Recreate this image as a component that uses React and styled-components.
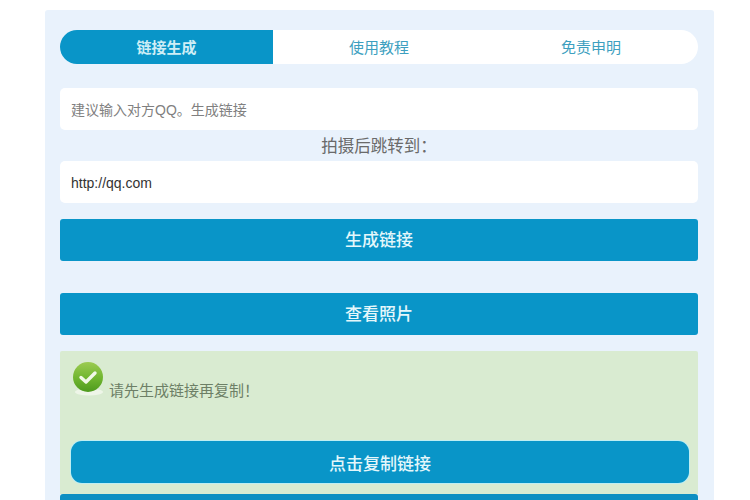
import React from 'react';
import styled, { createGlobalStyle } from 'styled-components';

const GlobalStyle = createGlobalStyle`
    html, body {
        margin: 0;
        height: 500px;
        overflow: hidden;
        background: #fff;
        font-family: "Liberation Sans", "Noto Sans CJK SC", sans-serif;
    }
    * {
        box-sizing: border-box;
    }
`;

const Page = styled.div`
    width: 750px;
    height: 500px;
    padding: 10px 0 0 45px;
    overflow: hidden;
`;

const Panel = styled.div`
    width: 669px;
    padding: 20px 16px 0 15px;
    background: #e9f2fc;
    border-radius: 3px 3px 0 0;
    height: 490px;
`;

const Tabs = styled.div`
    display: grid;
    grid-template-columns: 213px 212px 212px;
    height: 34px;
    background: #fff;
    border-radius: 17px;
    overflow: hidden;
    margin-bottom: 24px;
`;

const Tab = styled.div`
    display: flex;
    align-items: center;
    justify-content: center;
    padding-bottom: 1px;
    font-size: 15px;
    font-weight: ${p => (p.$active ? 'bold' : 'normal')};
    color: ${p => (p.$active ? '#cfeef6' : '#3d9fc0')};
    background: ${p => (p.$active ? '#0995c8' : 'transparent')};
`;

const Field = styled.input`
    display: block;
    width: 638px;
    height: 42px;
    padding: 2px 11px 0;
    border: 0;
    outline: 0;
    border-radius: 5px;
    background: #fff;
    font-family: inherit;
    font-size: 14px;
    color: #333;

    &::placeholder {
        color: #808080;
        opacity: 1;
    }
`;

const Label = styled.div`
    height: 31px;
    line-height: 32px;
    text-align: center;
    font-size: 16.5px;
    color: #6a6a6a;
`;

const Button = styled.div`
    display: flex;
    align-items: center;
    justify-content: center;
    width: 638px;
    height: 42px;
    margin-top: ${p => p.$top}px;
    padding-bottom: 3px;
    border-radius: 3px;
    background: #0995c8;
    color: #e4f7fb;
    font-size: 17px;
    font-weight: 500;
`;

const Notice = styled.div`
    width: 638px;
    height: 143px;
    margin-top: 16px;
    padding: 10px 10px 0 11px;
    background: #d9ebd1;
    border-radius: 2px 2px 0 0;
`;

const Message = styled.div`
    display: flex;
    align-items: flex-start;
    height: 80px;
    color: #6d7f66;
    font-size: 15px;
`;

const MessageText = styled.span`
    margin-top: 18px;
    margin-left: 0;
`;

const CopyButton = styled(Button)`
    width: 618px;
    height: 42px;
    margin-top: 0;
    padding-bottom: 0;
    border-radius: 11px;
    box-shadow: 0 0 0 1px #bfeef2;
`;

const BottomBar = styled.div`
    width: 638px;
    height: 20px;
    background: #0d8fc2;
    border-radius: 3px 3px 0 0;
`;

function CheckBadge() {
    return (
        <svg width="38" height="40" viewBox="0 0 38 40" style={{ flex: 'none' }}>
            <defs>
                <linearGradient id="badge" x1="0" y1="0" x2="0" y2="1">
                    <stop offset="0" stopColor="#9ccb52" />
                    <stop offset="0.55" stopColor="#6fb52f" />
                    <stop offset="1" stopColor="#4e9a1e" />
                </linearGradient>
            </defs>
            <ellipse cx="18" cy="31" rx="14" ry="3.5" fill="#eef5e8" />
            <circle cx="17" cy="16" r="15" fill="url(#badge)" />
            <path d="M10 16.5 L15 21 L24 12" fill="none" stroke="#f1f8e8" strokeWidth="3.4" strokeLinecap="round" strokeLinejoin="round" />
        </svg>
    );
}

export default function App() {
    return (
        <Page>
            <GlobalStyle />
            <Panel>
                <Tabs>
                    <Tab $active>链接生成</Tab>
                    <Tab>使用教程</Tab>
                    <Tab>免责申明</Tab>
                </Tabs>
                <Field placeholder="建议输入对方QQ。生成链接" readOnly />
                <Label>拍摄后跳转到：</Label>
                <Field defaultValue="http://qq.com" />
                <Button $top={16}>生成链接</Button>
                <Button $top={32}>查看照片</Button>
                <Notice>
                    <Message>
                        <CheckBadge />
                        <MessageText>请先生成链接再复制！</MessageText>
                    </Message>
                    <CopyButton>点击复制链接</CopyButton>
                </Notice>
                <BottomBar />
            </Panel>
        </Page>
    );
}
